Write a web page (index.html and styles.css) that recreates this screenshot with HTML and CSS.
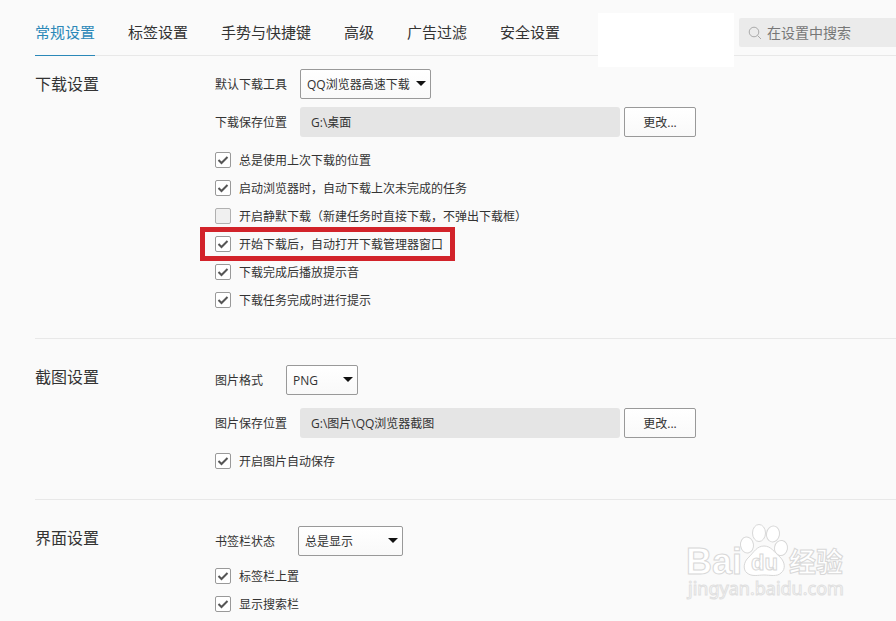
FILE: index.html
```html
<!DOCTYPE html>
<html lang="zh-CN">

<head>
    <meta charset="utf-8">
    <title>设置</title>
    <link rel="stylesheet" href="styles.css">
</head>

<body>
    <header class="header">
        <nav class="tabs">
            <a class="tab active" href="#general">常规设置</a>
            <a class="tab" href="#tabs">标签设置</a>
            <a class="tab" href="#gesture">手势与快捷键</a>
            <a class="tab" href="#advanced">高级</a>
            <a class="tab" href="#adblock">广告过滤</a>
            <a class="tab" href="#security">安全设置</a>
        </nav>
        <div class="blank"></div>
        <label class="search">
            <svg class="search-icon" viewBox="0 0 14 14" width="14" height="14" aria-hidden="true">
                <circle cx="6" cy="6" r="4.8" fill="none" stroke="#aaa" />
                <path d="M9.5 9.5L13 13" stroke="#aaa" />
            </svg>
            <input type="text" placeholder="在设置中搜索" aria-label="在设置中搜索">
        </label>
    </header>

    <main>
        <section class="section first" id="general">
            <h2>下载设置</h2>
            <div class="content">
                <div class="row">
                    <label for="tool">默认下载工具</label>
                    <div class="select wide">
                        <select id="tool">
                            <option>QQ浏览器高速下载</option>
                        </select>
                    </div>
                </div>
                <div class="row">
                    <label for="savepath">下载保存位置</label>
                    <div class="path">
                        <input type="text" id="savepath" value="G:\桌面" readonly>
                        <button type="button">更改...</button>
                    </div>
                </div>
                <div class="checks">
                    <label class="check"><input type="checkbox" checked>总是使用上次下载的位置</label>
                    <label class="check"><input type="checkbox" checked>启动浏览器时，自动下载上次未完成的任务</label>
                    <label class="check"><input type="checkbox">开启静默下载（新建任务时直接下载，不弹出下载框）</label>
                    <label class="check marked"><input type="checkbox" checked>开始下载后，自动打开下载管理器窗口</label>
                    <label class="check"><input type="checkbox" checked>下载完成后播放提示音</label>
                    <label class="check"><input type="checkbox" checked>下载任务完成时进行提示</label>
                </div>
            </div>
        </section>

        <section class="section capture">
            <h2>截图设置</h2>
            <div class="content">
                <div class="row spaced">
                    <label for="format">图片格式</label>
                    <div class="select small">
                        <select id="format">
                            <option>PNG</option>
                        </select>
                    </div>
                </div>
                <div class="row">
                    <label for="imgpath">图片保存位置</label>
                    <div class="path">
                        <input type="text" id="imgpath" value="G:\图片\QQ浏览器截图" readonly>
                        <button type="button">更改...</button>
                    </div>
                </div>
                <div class="checks">
                    <label class="check"><input type="checkbox" checked>开启图片自动保存</label>
                </div>
            </div>
        </section>

        <section class="section interface">
            <h2>界面设置</h2>
            <div class="content">
                <div class="row spaced">
                    <label for="bookmarks">书签栏状态</label>
                    <div class="select medium">
                        <select id="bookmarks">
                            <option>总是显示</option>
                        </select>
                    </div>
                </div>
                <div class="checks">
                    <label class="check"><input type="checkbox" checked>标签栏上置</label>
                    <label class="check"><input type="checkbox" checked>显示搜索栏</label>
                </div>
            </div>
        </section>
    </main>

    <svg class="watermark" viewBox="0 0 164 80" width="164" height="80">
        <g class="mark">
            <text class="brand" x="0" y="52">Bai</text>
            <ellipse cx="61" cy="23" rx="6.5" ry="8" transform="rotate(-8 61 23)" />
            <ellipse cx="73" cy="11" rx="6.5" ry="8.5" />
            <ellipse cx="87" cy="12" rx="6.500" ry="8" transform="rotate(10 87 12)" />
            <ellipse cx="95" cy="26" rx="6.500" ry="7.500" transform="rotate(10 95 26)" />
            <path d="M78 24C71 24 68 30 63 35C57 40 57 48 61 51C66 55 72 53 78 53C84 53 91 55 95 51C100 47 99 40 94 35C88 30 85 24 78 24Z" />
            <text class="du" x="65" y="48">du</text>
            <text class="cn" x="103" y="50">经验</text>
            <text class="url" x="2" y="73">jingyan.baidu.com</text>
        </g>
    </svg>
</body>

</html>
```
FILE: styles.css
```css
* {
    box-sizing: border-box;
}

body {
    margin: 0;
    background: #fafafa;
    color: #333;
    font-family: "Open Sans", "Noto Sans CJK SC", sans-serif;
    font-size: 12px;
}

input,
select,
button {
    font: inherit;
    color: inherit;
}

.header {
    display: flex;
    height: 56px;
    margin-left: 35px;
    border-bottom: 1px solid #e8e8e8;
}

.tabs {
    display: flex;
    gap: 33px;
}

.tab {
    height: 56px;
    padding-top: 10px;
    line-height: 44px;
    font-size: 15px;
    color: #333;
    text-decoration: none;
    white-space: nowrap;
}

.tab.active {
    color: #2b88b8;
    border-bottom: 1px solid #2b88b8;
}

.blank {
    width: 136px;
    height: 54px;
    margin: 13px 5px -12px 38px;
    background: #fff;
}

.search {
    display: flex;
    flex: 1;
    align-items: center;
    gap: 5px;
    min-width: 0;
    height: 29px;
    margin-top: 18px;
    padding-left: 9px;
    background: #ebebeb;
    border-radius: 2px 0 0 2px;
}

.search-icon {
    flex: none;
}

.search input {
    flex: 1;
    min-width: 0;
    padding: 0;
    border: 0;
    background: none;
    font-size: 14px;
    outline: none;
}

.search input::placeholder {
    color: #777;
}

.section {
    display: flex;
    margin-left: 35px;
    padding: 26px 0 24px;
    border-bottom: 1px solid #e8e8e8;
}

.section.first {
    padding-top: 13px;
}

.section.interface {
    padding-bottom: 0;
    border-bottom: 0;
}

h2 {
    flex: none;
    width: 180px;
    margin: 0;
    font-size: 16px;
    font-weight: normal;
    line-height: 24px;
}

.first h2 {
    line-height: 30px;
}

.content {
    flex: 1;
}

.row {
    display: flex;
    align-items: center;
    gap: 13px;
    height: 30px;
    margin-top: 8px;
}

.row:first-child {
    margin-top: 0;
}

.capture .row + .row {
    margin-top: 13px;
}

.row.spaced {
    gap: 23px;
}

.select {
    position: relative;
    height: 30px;
}

.select.wide {
    width: 131px;
}

.select.medium {
    width: 105px;
}

.select.small {
    width: 72px;
}

.select select {
    appearance: none;
    width: 100%;
    height: 100%;
    padding: 0 6px;
    border: 1px solid #999;
    border-radius: 2px;
    background: linear-gradient(#fff, #f9f9f9);
}

/* drop-down arrow */
.select::after {
    content: "";
    position: absolute;
    top: 12px;
    right: 5px;
    border: 5px solid transparent;
    border-top-color: #111;
    border-bottom: 0;
    pointer-events: none;
}

.path {
    display: flex;
    gap: 4px;
}

.path input {
    width: 320px;
    height: 30px;
    padding: 0 11px;
    border: 0;
    border-radius: 3px;
    background: #e5e5e5;
}

.path button {
    width: 72px;
    height: 30px;
    padding: 0;
    border: 1px solid #999;
    border-radius: 2px;
    background: linear-gradient(#fff, #f9f9f9);
}

.checks {
    display: flex;
    flex-direction: column;
    align-items: flex-start;
    margin-top: 9px;
}

.interface .checks {
    margin-top: 6px;
}

.check {
    display: flex;
    align-items: center;
    gap: 8px;
    height: 28px;
    white-space: nowrap;
}

.check input {
    appearance: none;
    width: 16px;
    height: 16px;
    margin: 0;
    border: 1px solid #b0b0b0;
    border-radius: 2px;
    background: #f0f0f0;
}

.check input:checked {
    border-color: #999;
    background: #fff url("data:image/svg+xml,%3Csvg xmlns='http://www.w3.org/2000/svg' viewBox='0 0 14 14'%3E%3Cpath d='M2.500 7L5.500 10L11.500 4' fill='none' stroke='%23555' stroke-width='2'/%3E%3C/svg%3E");
}

/* red frame round the option */
.marked {
    position: relative;
}

.marked::after {
    content: "";
    position: absolute;
    inset: -3px -12px -3px -15px;
    border: 5px solid #d2232a;
    pointer-events: none;
}

.watermark {
    position: absolute;
    top: 522px;
    right: 46px;
    pointer-events: none;
}

.mark {
    fill: #fff;
    stroke: #d8d8d8;
    stroke-width: 1px;
}

.brand {
    font: bold 36px "Liberation Sans", sans-serif;
}

.du {
    font: bold 22px "Liberation Sans", sans-serif;
}

.cn {
    font: bold 27px "Noto Sans CJK SC", sans-serif;
}

.url {
    font: 18px "Noto Sans", sans-serif;
    stroke: #e0e0e0;
}
```
